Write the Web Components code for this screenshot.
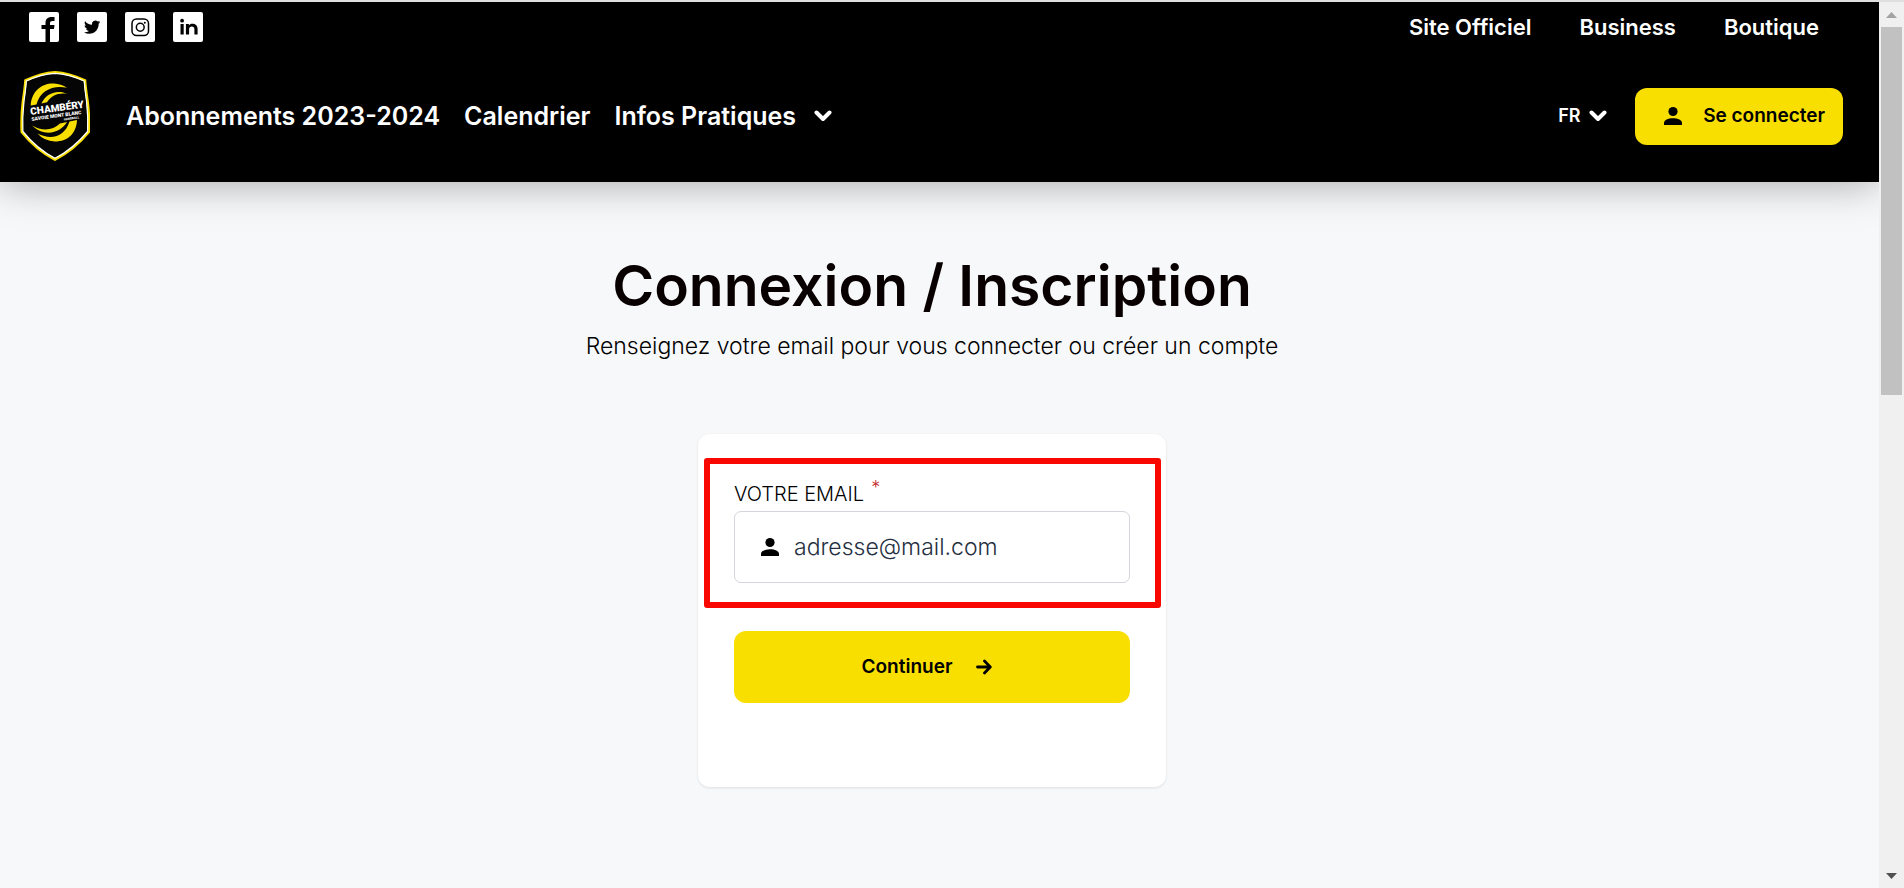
<!DOCTYPE html>
<html lang="fr">
<head>
<meta charset="utf-8">
<meta name="viewport" content="width=device-width, initial-scale=1">
<title>Connexion / Inscription</title>
<style>
  body {
    margin: 0;
    font-family: Inter, "Open Sans", sans-serif;
    color: #000;
    background: #f7f8fa;
  }
</style>
</head>
<body>

<app-shell>
  <site-header slot="header">
    <social-link slot="social" name="facebook" label="Facebook"></social-link>
    <social-link slot="social" name="twitter" label="Twitter"></social-link>
    <social-link slot="social" name="instagram" label="Instagram"></social-link>
    <social-link slot="social" name="linkedin" label="LinkedIn"></social-link>
    <nav-link slot="top" small>Site Officiel</nav-link>
    <nav-link slot="top" small>Business</nav-link>
    <nav-link slot="top" small>Boutique</nav-link>
    <nav-link slot="nav">Abonnements 2023-2024</nav-link>
    <nav-link slot="nav">Calendrier</nav-link>
    <nav-menu slot="nav">Infos Pratiques</nav-menu>
    <lang-select slot="actions"></lang-select>
    <yellow-button slot="actions" icon="user">Se connecter</yellow-button>
  </site-header>
  <page-title>
    Connexion / Inscription
    <span slot="subtitle">Renseignez votre email pour vous connecter ou créer un compte</span>
  </page-title>
  <login-card>
    <email-field>VOTRE EMAIL</email-field>
    <yellow-button large icon-end="arrow">Continuer</yellow-button>
  </login-card>
</app-shell>

<script>
const icons = {
  facebook: '<path fill="#000" d="M16.500 30V17H12.500V13H16.500V11C16.500 7 19 5 22.500 5H25.500V9H23.500C21.800 9 21 9.800 21 11.300V13H25.500L25 17H21V30Z"/>',
  twitter: '<path fill="#000" transform="translate(7 7) scale(.68)" d="M23.950 4.570a10 10 0 0 1-2.820.77 4.960 4.960 0 0 0 2.160-2.720c-.95.55-2 .95-3.130 1.180a4.920 4.920 0 0 0-8.380 4.480C7.690 8.090 4.070 6.130 1.640 3.160a4.820 4.820 0 0 0-.67 2.480c0 1.710.87 3.210 2.190 4.100a4.900 4.900 0 0 1-2.230-.62v.06a4.920 4.920 0 0 0 3.950 4.830 5 5 0 0 1-2.210.08 4.940 4.940 0 0 0 4.600 3.420A9.870 9.870 0 0 1 0 19.540a13.990 13.990 0 0 0 7.550 2.210c9.050 0 14-7.500 14-13.980 0-.21 0-.42-.02-.63a9.940 9.940 0 0 0 2.460-2.550z"/>',
  instagram: '<g fill="none" stroke="#000" stroke-width="1.500"><rect x="7" y="7" width="16.500" height="16.500" rx="4.500"/><circle cx="15.250" cy="15.250" r="3.900"/></g><circle cx="19.800" cy="10.700" r="1" fill="#000"/>',
  linkedin: '<path fill="#000" d="M7.500 12H10.700V22.500H7.500ZM12.900 12H15.900V13.400C16.600 12.300 17.700 11.700 19.200 11.700C22.400 11.700 24.600 13.500 24.600 16.800V22.500H21.400V17.200C21.400 15.400 20.400 14.500 18.900 14.500C17.200 14.500 16.100 15.500 16.100 17.300V22.500H12.900Z"/><circle cx="9.100" cy="8.700" r="1.900" fill="#000"/>',
  user: '<svg width="20" height="20" viewBox="0 0 20 20" aria-hidden="true"><circle cx="10" cy="5.500" r="4.600" fill="#000"/><path fill="#000" d="M1 19V17C1 14 5 12.200 10 12.200S19 14 19 17V19Z"/></svg>',
  arrow: '<svg width="16" height="16" viewBox="0 0 16 16" aria-hidden="true"><path d="M1.500 8H14M8.500 2L14.300 8L8.500 14" fill="none" stroke="#000" stroke-width="2.800" stroke-linecap="round" stroke-linejoin="round"/></svg>',
  chevron: '<svg width="18" height="12" viewBox="0 0 18 12" aria-hidden="true"><path d="M2.500 2.500L9 9L15.500 2.500" fill="none" stroke="#fff" stroke-width="4" stroke-linecap="round" stroke-linejoin="round"/></svg>'
};

class AppShell extends HTMLElement {
  constructor() {
    super();
    this.attachShadow({ mode: "open" }).innerHTML = `
      <style>
        :host {
          display: grid;
          grid-template-columns: 1fr 25px;
          height: 100vh;
          border-top: 2px solid #dfdfdf;
          box-sizing: border-box;
          overflow: hidden;
        }
        .page { min-width: 0; overflow: hidden; }
        main {
          display: flex;
          flex-direction: column;
          align-items: center;
          padding: 64px 15px 96px 0;
        }
      </style>
      <div class="page">
        <slot name="header"></slot>
        <main><slot></slot></main>
      </div>
      <page-scrollbar></page-scrollbar>
    `;
  }
}

class PageScrollbar extends HTMLElement {
  constructor() {
    super();
    this.attachShadow({ mode: "open" }).innerHTML = `
      <style>
        :host {
          display: flex;
          flex-direction: column;
          align-items: center;
          background: #f0f0f0;
        }
        svg { display: block; flex: none; }
        .track { flex: 1; width: 21px; }
        .thumb { height: 44%; background: #c1c1c1; }
      </style>
      <svg width="25" height="25" viewBox="0 0 25 25"><path d="M7 16L12.500 10L18 16Z" fill="#a3a3a3"/></svg>
      <div class="track"><div class="thumb"></div></div>
      <svg width="25" height="25" viewBox="0 0 25 25"><path d="M7 10L12.500 16L18 10Z" fill="#505050"/></svg>
    `;
  }
}

class SiteHeader extends HTMLElement {
  constructor() {
    super();
    this.attachShadow({ mode: "open" }).innerHTML = `
      <style>
        :host {
          display: block;
          position: relative;
          background: #000;
          color: #fff;
          box-shadow: 0 0 40px rgba(0, 0, 0, .35);
        }
        .bar, .social, .top, .nav, .actions { display: flex; align-items: center; }
        .top-bar { height: 50px; padding: 0 60px 0 29px; justify-content: space-between; }
        .main-bar { height: 130px; padding: 0 36px 2px 20px; box-sizing: border-box; }
        .social { gap: 18px; }
        .top { gap: 48px; }
        .nav { gap: 24px; margin-left: 36px; flex: 1; }
        .actions { gap: 28px; }
      </style>
      <div class="bar top-bar">
        <div class="social"><slot name="social"></slot></div>
        <nav class="top"><slot name="top"></slot></nav>
      </div>
      <div class="bar main-bar">
        <club-logo></club-logo>
        <nav class="nav"><slot name="nav"></slot></nav>
        <div class="actions"><slot name="actions"></slot></div>
      </div>
    `;
  }
}

class SocialLink extends HTMLElement {
  connectedCallback() {
    this.attachShadow({ mode: "open" }).innerHTML = `
      <style>
        :host { display: block; }
        a { display: block; background: #fff; border-radius: 2px; }
        svg { display: block; }
      </style>
      <a href="#" aria-label="${this.getAttribute("label")}">
        <svg width="30" height="30" viewBox="0 0 30 30">${icons[this.getAttribute("name")]}</svg>
      </a>
    `;
  }
}

class ClubLogo extends HTMLElement {
  constructor() {
    super();
    this.attachShadow({ mode: "open" }).innerHTML = `
      <style>
        :host { display: block; flex: none; }
        svg { display: block; }
        text { font-family: Roboto, sans-serif; font-weight: 900; fill: #fff; }
      </style>
      <svg width="70" height="92" viewBox="0 0 70 92">
        <path d="M5.500 10.500Q21 3 35 2.200Q49 3 65 10.500Q65.500 18 67.500 31Q69.500 47 68.700 62Q54 80 35 89.500Q16 80 1.800 62Q1 47 3 31Q5 18 5.500 10.500Z" fill="#050505" stroke="#f9df00" stroke-width="2.600"/>
        <path d="M6.300 11Q21 4 35 3.300Q49 4 64.200 11Q64.800 19 66.500 31Q68.300 47 67.600 61.500Q53 79 35 88.300Q17 79 2.900 61.500Q2.200 47 4 31Q5.800 19 6.300 11Z" fill="none" stroke="#fff" stroke-width="1.200"/>
        <g fill="#f9df00">
          <path d="M10.700 35.500C11.500 21 22 13 34 13.500Q41 14 47 17.800C34 14.700 20 20 16.500 34.500Z"/>
          <path d="M21.500 33.500C25 24.500 36 18.500 47.800 24C38 22.500 31.500 25.500 27 32.300Z"/>
          <path d="M57 50C56.500 63 48 71.500 35 71.500Q24 71 17.500 63.500C32 71 45 66 49.500 51.500Z"/>
          <path d="M47 52C42 61 26 69 12 55.500C23 62 33 60 40 53.500Z"/>
        </g>
        <g transform="rotate(-8 11 46)">
          <text x="11" y="45" font-size="10">CHAMBÉRY</text>
          <text x="11" y="51" font-size="5">SAVOIE MONT BLANC</text>
          <text x="43" y="55" font-size="3">HANDBALL</text>
        </g>
      </svg>
    `;
  }
}

class NavLink extends HTMLElement {
  constructor() {
    super();
    this.attachShadow({ mode: "open" }).innerHTML = `
      <style>
        :host { display: block; font-size: 25px; line-height: 36px; font-weight: 600; white-space: nowrap; }
        :host([small]) { font-size: 22px; line-height: 32px; }
        a { color: inherit; text-decoration: none; }
      </style>
      <a href="#"><slot></slot></a>
    `;
  }
}

class NavMenu extends HTMLElement {
  constructor() {
    super();
    this.attachShadow({ mode: "open" }).innerHTML = `
      <style>
        :host { display: block; }
        button {
          display: flex;
          align-items: center;
          gap: 18px;
          padding: 0;
          border: 0;
          background: none;
          color: inherit;
          font-family: inherit;
          font-size: 25px;
          line-height: 36px;
          font-weight: 600;
          white-space: nowrap;
        }
      </style>
      <button type="button" aria-haspopup="true"><slot></slot>${icons.chevron}</button>
    `;
  }
}

class LangSelect extends HTMLElement {
  constructor() {
    super();
    this.attachShadow({ mode: "open" }).innerHTML = `
      <style>
        :host { display: flex; align-items: center; gap: 8px; }
        select {
          appearance: none;
          padding: 0;
          border: 0;
          background: #000;
          color: #fff;
          font-family: inherit;
          font-size: 18px;
          line-height: 28px;
          font-weight: 600;
        }
      </style>
      <select aria-label="Langue"><option>FR</option></select>${icons.chevron}
    `;
  }
}

class YellowButton extends HTMLElement {
  connectedCallback() {
    const start = icons[this.getAttribute("icon")] || "";
    const end = icons[this.getAttribute("icon-end")] || "";
    this.attachShadow({ mode: "open" }).innerHTML = `
      <style>
        :host { display: block; }
        button {
          display: flex;
          align-items: center;
          justify-content: center;
          gap: 20px;
          width: 100%;
          height: 57px;
          padding: 0 18px 0 28px;
          border: 0;
          border-radius: 12px;
          background: #f9df00;
          color: #000;
          font-family: inherit;
          font-size: 19px;
          line-height: 28px;
          font-weight: 600;
          white-space: nowrap;
        }
        :host([large]) button { height: 72px; padding: 0 28px 0 18px; gap: 24px; }
      </style>
      <button type="button">${start}<slot></slot>${end}</button>
    `;
  }
}

class PageTitle extends HTMLElement {
  constructor() {
    super();
    this.attachShadow({ mode: "open" }).innerHTML = `
      <style>
        :host { display: block; text-align: center; }
        h1 { margin: 0; font-size: 57px; line-height: 80px; font-weight: 600; color: #080000; }
        p { margin: 4px 0 0; font-size: 23px; line-height: 32px; font-weight: 300; }
      </style>
      <h1><slot></slot></h1>
      <p><slot name="subtitle"></slot></p>
    `;
  }
}

class LoginCard extends HTMLElement {
  constructor() {
    super();
    this.attachShadow({ mode: "open" }).innerHTML = `
      <style>
        :host {
          display: flex;
          flex-direction: column;
          gap: 48px;
          width: 468px;
          margin-top: 72px;
          padding: 44px 36px 84px;
          box-sizing: border-box;
          border-radius: 12px;
          background: #fff;
          box-shadow: 0 1px 3px rgba(0, 0, 0, .1);
        }
      </style>
      <slot></slot>
    `;
  }
}

class EmailField extends HTMLElement {
  constructor() {
    super();
    this.attachShadow({ mode: "open" }).innerHTML = `
      <style>
        :host { display: block; position: relative; }
        label { display: flex; gap: 7px; height: 33px; font-size: 20px; line-height: 32px; font-weight: 300; }
        .required { color: #c53030; font-size: 18px; line-height: 20px; }
        .box {
          display: flex;
          align-items: center;
          gap: 14px;
          height: 72px;
          padding: 0 25px;
          box-sizing: border-box;
          border: 1px solid #d2d6dc;
          border-radius: 7px;
        }
        .box svg { flex: none; }
        input {
          flex: 1;
          min-width: 0;
          padding: 0;
          border: 0;
          outline: 0;
          background: none;
          font-family: inherit;
          font-size: 23px;
          line-height: 32px;
          font-weight: 300;
        }
        input::placeholder { color: #252f3f; opacity: 1; }
        /* red frame drawn over the field */
        .frame {
          position: absolute;
          inset: -20px -31px -25px -30px;
          border: 6px solid #f80800;
          border-radius: 3px;
          pointer-events: none;
        }
      </style>
      <label for="email"><slot></slot><span class="required">*</span></label>
      <div class="box">${icons.user}<input id="email" type="email" placeholder="adresse@mail.com" required></div>
      <div class="frame"></div>
    `;
  }
}

customElements.define("page-scrollbar", PageScrollbar);
customElements.define("club-logo", ClubLogo);
customElements.define("app-shell", AppShell);
customElements.define("site-header", SiteHeader);
customElements.define("social-link", SocialLink);
customElements.define("nav-link", NavLink);
customElements.define("nav-menu", NavMenu);
customElements.define("lang-select", LangSelect);
customElements.define("yellow-button", YellowButton);
customElements.define("page-title", PageTitle);
customElements.define("login-card", LoginCard);
customElements.define("email-field", EmailField);
</script>
</body>
</html>
